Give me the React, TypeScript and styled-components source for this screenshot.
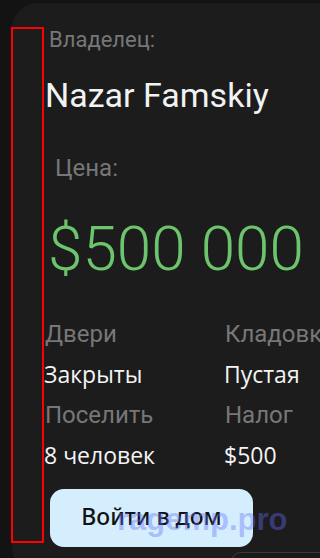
import styled, { createGlobalStyle } from "styled-components";

const GlobalStyle = createGlobalStyle`
  html, body {
    margin: 0;
    padding: 0;
    background: #131313;
    overflow: hidden;
  }
  body {
    font-family: Roboto, "Liberation Sans", sans-serif;
  }
`;

const Page = styled.div`
  position: relative;
  width: 100%;
  height: 558px;
  padding: 3px 0 0 12px;
  box-sizing: border-box;
  overflow: hidden;
`;

const Card = styled.div`
  width: 460px;
  height: 570px;
  box-sizing: border-box;
  padding: 26px 0 0 33px;
  background: #1c1c1c;
  border-radius: 26px;
  display: flex;
  flex-direction: column;
  align-items: flex-start;
`;

const Label = styled.div<{ $size: number; $shift?: number }>`
  font-size: ${(p) => p.$size}px;
  line-height: 1;
  color: #777777;
  margin-left: ${(p) => p.$shift ?? 0}px;
  white-space: nowrap;
`;

const OwnerName = styled.div`
  margin-top: 27px;
  font-size: 34px;
  line-height: 1;
  color: #f2f2f2;
  white-space: nowrap;
`;

const Price = styled.div`
  margin: 38px 0 0 3px;
  font-size: 62px;
  font-weight: 300;
  line-height: 1;
  color: #6cc46c;
  white-space: nowrap;
`;

const Specs = styled.div`
  margin-top: 42px;
  display: grid;
  grid-template-columns: 180px auto;
  row-gap: 17px;
`;

const Spec = styled.div`
  display: flex;
  flex-direction: column;
  gap: 17px;
`;

const Value = styled.div`
  font-family: "Open Sans", Roboto, sans-serif;
  font-size: 23px;
  line-height: 1;
  color: #f4f4f4;
  white-space: nowrap;
  margin-left: -1px;
`;

const EnterButton = styled.button`
  margin: 22px 0 0 5px;
  width: 203px;
  height: 58px;
  border: none;
  border-radius: 14px;
  background: #d5eefd;
  color: #121212;
  font-family: "Noto Sans", "Liberation Sans", sans-serif;
  font-size: 23px;
  font-weight: 500;
  padding: 0 0 4px 0;
`;

const Marker = styled.div`
  position: absolute;
  left: 11px;
  top: 27px;
  width: 33px;
  height: 516px;
  box-sizing: border-box;
  border: 2px solid #ff0000;
  pointer-events: none;
`;

const Watermark = styled.div`
  position: absolute;
  left: 117px;
  top: 502px;
  font-family: "Liberation Sans", Arial, sans-serif;
  font-size: 31px;
  font-weight: 700;
  color: rgba(100, 112, 255, 0.4);
  white-space: nowrap;
  pointer-events: none;
`;

const NextPanel = styled.div`
  position: absolute;
  left: 231px;
  top: 552px;
  width: 120px;
  height: 30px;
  border: 1px solid #3b3b3b;
  border-radius: 10px;
  background: #1a1a1a;
`;

const specs = [
  { label: "Двери", value: "Закрыты" },
  { label: "Кладовка", value: "Пустая" },
  { label: "Поселить", value: "8 человек" },
  { label: "Налог", value: "$500" },
];

export default function App() {
  return (
    <>
      <GlobalStyle />
      <Page>
        <Card>
          <Label $size={22} $shift={4}>Владелец:</Label>
          <OwnerName>Nazar Famskiy</OwnerName>
          <Label $size={24} $shift={10} style={{ marginTop: 44 }}>Цена:</Label>
          <Price>$500 000</Price>
          <Specs>
            {specs.map((s) => (
              <Spec key={s.label}>
                <Label $size={24}>{s.label}</Label>
                <Value>{s.value}</Value>
              </Spec>
            ))}
          </Specs>
          <EnterButton>Войти в дом</EnterButton>
        </Card>
        <NextPanel />
        <Marker />
        <Watermark>ragemp.pro</Watermark>
      </Page>
    </>
  );
}
